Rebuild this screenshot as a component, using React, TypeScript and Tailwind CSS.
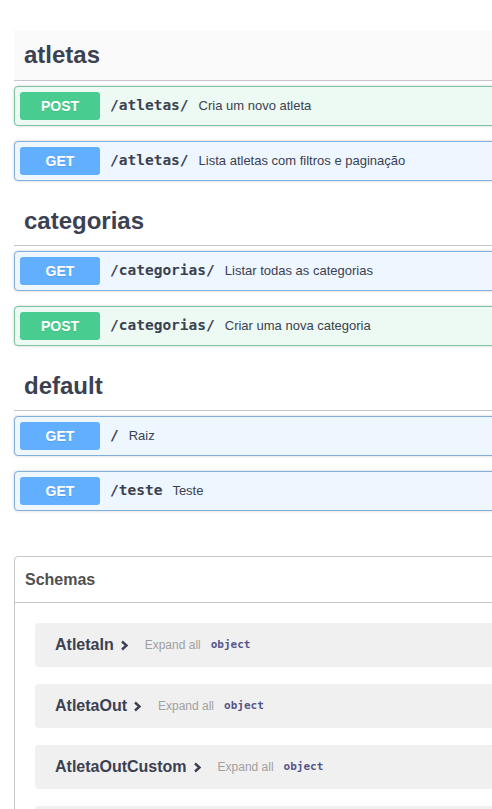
type Method = "GET" | "POST";

type Op = { method: Method; path: string; summary: string };

const tags: { name: string; highlight?: boolean; ops: Op[] }[] = [
  {
    name: "atletas",
    highlight: true,
    ops: [
      { method: "POST", path: "/atletas/", summary: "Cria um novo atleta" },
      { method: "GET", path: "/atletas/", summary: "Lista atletas com filtros e paginação" },
    ],
  },
  {
    name: "categorias",
    ops: [
      { method: "GET", path: "/categorias/", summary: "Listar todas as categorias" },
      { method: "POST", path: "/categorias/", summary: "Criar uma nova categoria" },
    ],
  },
  {
    name: "default",
    ops: [
      { method: "GET", path: "/", summary: "Raiz" },
      { method: "GET", path: "/teste", summary: "Teste" },
    ],
  },
];

// last one only peeks in at the bottom edge
const schemas = ["AtletaIn", "AtletaOut", "AtletaOutCustom", ""];

function Chevron() {
  return (
    <svg width="9" height="11" viewBox="0 0 9 11" className="ml-[6px]">
      <polyline
        points="2,1.5 6.5,5.5 2,9.5"
        fill="none"
        stroke="#3b4151"
        strokeWidth="2.4"
      />
    </svg>
  );
}

function OpRow({ op }: { op: Op }) {
  const post = op.method === "POST";
  return (
    <div
      className={
        post
          ? "mb-[15px] flex h-[40px] items-center rounded-[4px] border border-[#7cc4a1] bg-[#ecfaf3] px-[5px] shadow-[0_0_3px_rgba(0,0,0,0.19)]"
          : "mb-[15px] flex h-[40px] items-center rounded-[4px] border border-[#80afdc] bg-[#eef6ff] px-[5px] shadow-[0_0_3px_rgba(0,0,0,0.19)]"
      }
    >
      <span
        className={
          post
            ? "flex h-[28px] w-[80px] items-center justify-center rounded-[3px] bg-[#49cc90] font-['Liberation_Sans',Arial,sans-serif] text-[14px] font-bold text-white [text-shadow:0_1px_0_rgba(0,0,0,0.1)]"
            : "flex h-[28px] w-[80px] items-center justify-center rounded-[3px] bg-[#61affe] font-['Liberation_Sans',Arial,sans-serif] text-[14px] font-bold text-white [text-shadow:0_1px_0_rgba(0,0,0,0.1)]"
        }
      >
        {op.method}
      </span>
      <span className="px-[10px] font-['DejaVu_Sans_Mono',monospace] text-[14.5px] font-bold text-[#3b4151]">
        {op.path}
      </span>
      <span className="font-['Liberation_Sans',Arial,sans-serif] text-[13px] text-[#3b4151]">
        {op.summary}
      </span>
    </div>
  );
}

export default function App() {
  return (
    <div className="h-[809px] w-full overflow-hidden bg-white">
      <div className="ml-[14px] w-[580px] pt-[30px]">
        {tags.map((tag) => (
          <section key={tag.name}>
            <h3
              className={
                tag.highlight
                  ? "mb-[5px] flex h-[51px] items-center border-b border-[#c4c6cb] bg-[#fafafa] pl-[10px] font-['Liberation_Sans',Arial,sans-serif] text-[24px] font-bold text-[#3b4151]"
                  : "mb-[5px] flex h-[50px] items-center border-b border-[#c4c6cb] pl-[10px] font-['Liberation_Sans',Arial,sans-serif] text-[24px] font-bold text-[#3b4151]"
              }
            >
              {tag.name}
            </h3>
            {tag.ops.map((op) => (
              <OpRow key={op.method + op.path} op={op} />
            ))}
          </section>
        ))}

        <section className="mt-[45px] rounded-[4px] border border-[#c4c6cb]">
          <h4 className="flex h-[46px] items-center border-b border-[#c4c6cb] pl-[10px] font-['Liberation_Sans',Arial,sans-serif] text-[16px] font-bold text-[#505050]">
            Schemas
          </h4>
          <div className="px-[20px] pt-[20px]">
            {schemas.map((name, i) => (
              <div
                key={i}
                className="mb-[17px] flex h-[44px] items-center rounded-[4px] bg-[#f0f0f0] pl-[20px]"
              >
                {name && (
                  <>
                    <span className="font-['Liberation_Sans',Arial,sans-serif] text-[16px] font-bold text-[#3b4151]">
                      {name}
                    </span>
                    <Chevron />
                    <span className="ml-[16px] font-['Liberation_Sans',Arial,sans-serif] text-[12px] text-[#a0a0a0]">
                      Expand all
                    </span>
                    <span className="ml-[10px] font-['DejaVu_Sans_Mono',monospace] text-[11px] font-bold text-[#55558a]">
                      object
                    </span>
                  </>
                )}
              </div>
            ))}
          </div>
        </section>
      </div>
    </div>
  );
}
